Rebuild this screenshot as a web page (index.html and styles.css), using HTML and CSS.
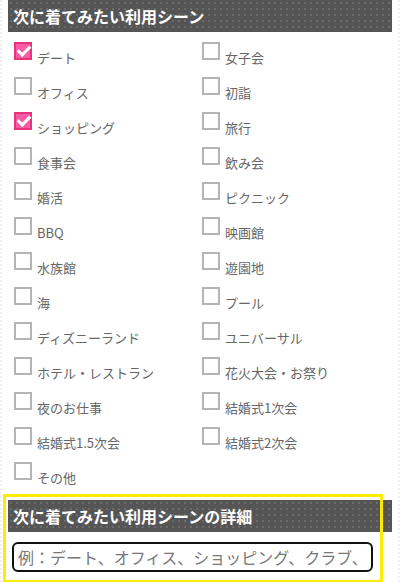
FILE: index.html
```html
<!DOCTYPE html>
<html lang="ja">
<head>
    <meta charset="UTF-8">
    <meta name="viewport" content="width=device-width, initial-scale=1.0">
    <title>利用シーン</title>
    <link rel="stylesheet" href="styles.css">
</head>
<body>
    <div class="page">
        <h2 class="bar">次に着てみたい利用シーン</h2>
        <ul class="scenes">
            <li><span class="box checked"></span><span class="label">デート</span></li>
            <li><span class="box"></span><span class="label">女子会</span></li>
            <li><span class="box"></span><span class="label">オフィス</span></li>
            <li><span class="box"></span><span class="label">初詣</span></li>
            <li><span class="box checked"></span><span class="label">ショッピング</span></li>
            <li><span class="box"></span><span class="label">旅行</span></li>
            <li><span class="box"></span><span class="label">食事会</span></li>
            <li><span class="box"></span><span class="label">飲み会</span></li>
            <li><span class="box"></span><span class="label">婚活</span></li>
            <li><span class="box"></span><span class="label">ピクニック</span></li>
            <li><span class="box"></span><span class="label">BBQ</span></li>
            <li><span class="box"></span><span class="label">映画館</span></li>
            <li><span class="box"></span><span class="label">水族館</span></li>
            <li><span class="box"></span><span class="label">遊園地</span></li>
            <li><span class="box"></span><span class="label">海</span></li>
            <li><span class="box"></span><span class="label">プール</span></li>
            <li><span class="box"></span><span class="label">ディズニーランド</span></li>
            <li><span class="box"></span><span class="label">ユニバーサル</span></li>
            <li><span class="box"></span><span class="label">ホテル・レストラン</span></li>
            <li><span class="box"></span><span class="label">花火大会・お祭り</span></li>
            <li><span class="box"></span><span class="label">夜のお仕事</span></li>
            <li><span class="box"></span><span class="label">結婚式1次会</span></li>
            <li><span class="box"></span><span class="label">結婚式1.5次会</span></li>
            <li><span class="box"></span><span class="label">結婚式2次会</span></li>
            <li><span class="box"></span><span class="label">その他</span></li>
        </ul>

        <div class="detail">
            <h2 class="bar">次に着てみたい利用シーンの詳細</h2>
            <input class="detail-input" type="text" placeholder="例：デート、オフィス、ショッピング、クラブ、">
            <div class="highlight"></div>
        </div>
    </div>
</body>
</html>
```

FILE: styles.css
```css
body {
    margin: 0;
    background: #fff;
    font-family: "Noto Sans CJK JP", "Liberation Sans", sans-serif;
}

.page {
    position: relative;
    height: 582px;
    padding: 0 6px;
    border-left: 2px dotted #f0f0f0;
    border-right: 2px dotted #f0f0f0;
    box-sizing: border-box;
}

.bar {
    margin: 0;
    height: 32px;
    padding-left: 5px;
    background-color: #555;
    background-image: radial-gradient(#6b6b6b 1px, transparent 1px);
    background-size: 6px 6px;
    color: #fff;
    font-size: 16px;
    font-weight: bold;
    line-height: 32px;
}

.scenes {
    list-style: none;
    margin: 10px 0 0 0;
    padding: 0 0 0 6px;
    display: grid;
    grid-template-columns: 188px 1fr;
    grid-auto-rows: 35px;
}

.scenes li {
    display: flex;
    align-items: flex-start;
}

.box {
    width: 18px;
    height: 18px;
    box-sizing: border-box;
    border: 2px solid #b4b4b4;
    background: #fff;
    flex: none;
}

.box.checked {
    border-color: #e8327a;
    background: #fb5aa5;
    position: relative;
}

.box.checked::after {
    content: "";
    position: absolute;
    left: 4px;
    top: -1px;
    width: 5px;
    height: 10px;
    border-right: 3px solid #fff;
    border-bottom: 3px solid #fff;
    transform: rotate(45deg);
}

.label {
    margin-left: 5px;
    padding-top: 7px;
    font-size: 13px;
    line-height: 18px;
    color: #666;
}

.detail {
    position: relative;
}

.detail .bar {
    margin-top: 3px;
}

.detail-input {
    display: block;
    margin: 10px 0 0 4px;
    width: 361px;
    height: 30px;
    box-sizing: border-box;
    border: 2px solid #111;
    border-radius: 6px;
    padding: 0 4px;
    font-family: "Noto Sans CJK JP", "Liberation Sans", sans-serif;
    font-size: 16px;
}

.detail-input::placeholder {
    color: #777;
}

.highlight {
    position: absolute;
    left: -5px;
    top: -6px;
    width: 380px;
    height: 89px;
    border: 3px solid #ffeb00;
    box-sizing: border-box;
    pointer-events: none;
}
```
